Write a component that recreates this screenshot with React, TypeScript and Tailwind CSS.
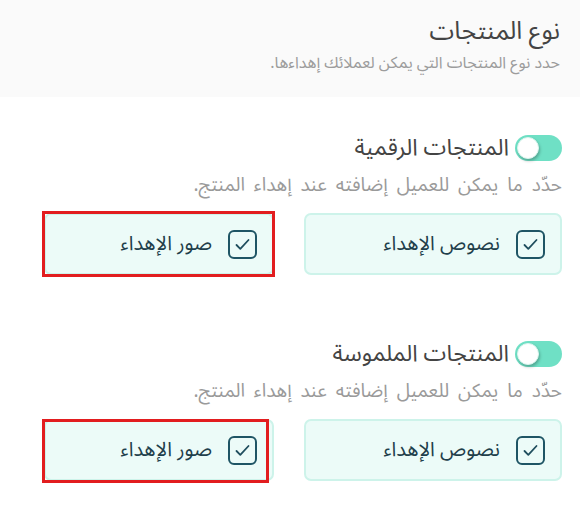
import React from "react";

const font = { fontFamily: '"Noto Sans Arabic", "DejaVu Sans", "Noto Sans", sans-serif' };

function Toggle() {
  return (
    <div className="relative h-[26px] w-[47px] shrink-0 rounded-full bg-[#6fe0c5]">
      <div className="absolute left-[2px] top-[2px] h-[22px] w-[22px] rounded-full border border-[#d9f5ee] bg-white shadow-[1px_2px_3px_rgba(0,0,0,0.25)]" />
    </div>
  );
}

function Check() {
  return (
    <div className="flex h-[29px] w-[29px] shrink-0 items-center justify-center rounded-[6px] border-2 border-[#1f5565] bg-transparent">
      <svg width="15" height="13" viewBox="0 0 15 13" fill="none">
        <path d="M1.5 7 L5.3 10.8 L13.5 2" stroke="#1f4e5e" strokeWidth="1.8" strokeLinecap="round" strokeLinejoin="round" />
      </svg>
    </div>
  );
}

function Card({ label, width, mark }: { label: string; width: string; mark?: "a" | "b" }) {
  return (
    <div className={`relative flex h-[62px] items-center gap-[16px] rounded-[7px] border-2 border-[#cdf3ea] bg-[#ecfbf8] pr-[15px] ${width}`}>
      <Check />
      <span className="text-[20px] leading-[30px] text-[#1f3f4b]">{label}</span>
      {mark === "a" && (
        <div className="pointer-events-none absolute -bottom-[4px] -left-[4px] -right-[3px] -top-[4px] border-[3px] border-[#e21d1f]" />
      )}
      {mark === "b" && (
        <div className="pointer-events-none absolute -bottom-[4px] -left-[4px] right-[3px] -top-[2px] border-[3px] border-[#e21d1f]" />
      )}
    </div>
  );
}

function Section({ title, mark }: { title: string; mark: "a" | "b" }) {
  return (
    <div className="flex flex-col">
      <div className="flex items-center gap-[6px]">
        <Toggle />
        <span className="text-[23px] leading-[32px] text-[#444]">{title}</span>
      </div>
      <p className="mt-[6px] text-[19px] leading-[30px] text-[#9a9a9a] [word-spacing:4px]">حدّد ما يمكن للعميل إضافته عند إهداء المنتج.</p>
      <div className="mt-[13px] flex gap-[30px]">
        <Card label="نصوص الإهداء" width="w-[258px]" />
        <Card label="صور الإهداء" width="w-[230px]" mark={mark} />
      </div>
    </div>
  );
}

export default function App() {
  return (
    <div dir="rtl" className="h-[511px] w-[580px] overflow-hidden bg-white" style={font}>
      <div className="h-[97px] bg-[#fafafa] pr-[20px] pt-[12px]">
        <h1 className="text-[25px] leading-[38px] text-[#444]">نوع المنتجات</h1>
        <p className="text-[16px] leading-[26px] text-[#9c9c9c]">حدد نوع المنتجات التي يمكن لعملائك إهداءها.</p>
      </div>
      <div className="flex flex-col gap-[63px] pr-[18px] pt-[35px]">
        <Section title="المنتجات الرقمية" mark="a" />
        <Section title="المنتجات الملموسة" mark="b" />
      </div>
    </div>
  );
}
